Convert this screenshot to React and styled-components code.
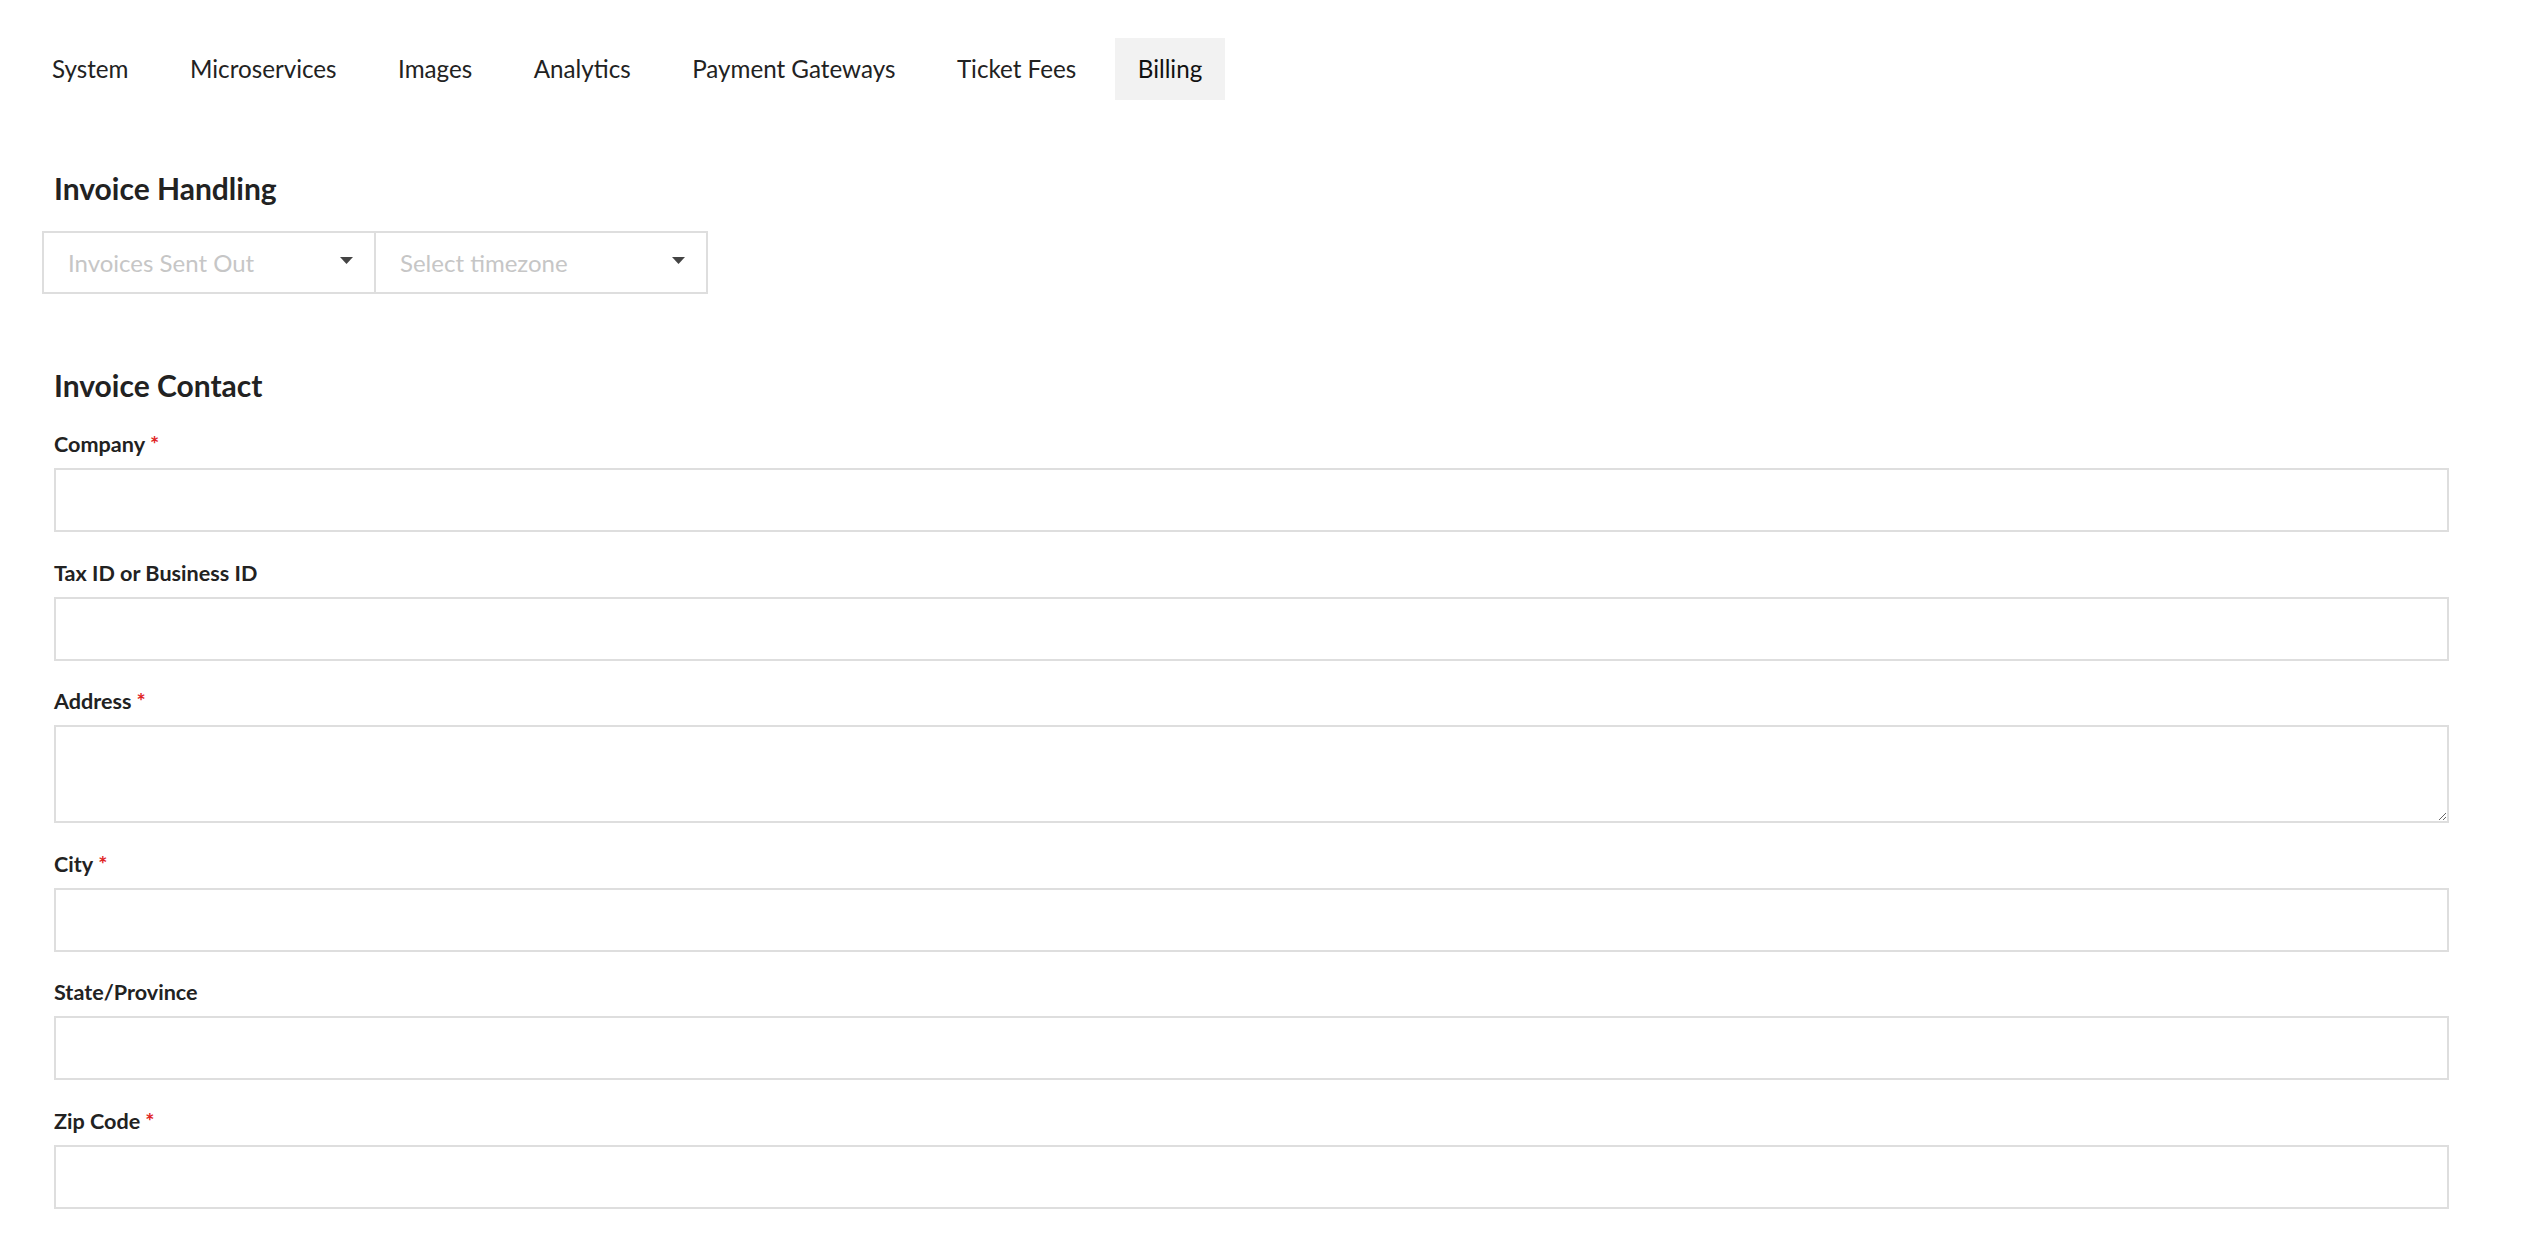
import React from 'react';
import styled, { createGlobalStyle } from 'styled-components';

const GlobalStyle = createGlobalStyle`
  body {
    margin: 0;
    background: #fff;
    color: #222;
    font-family: Lato, "Open Sans", "Liberation Sans", sans-serif;
  }
  * { box-sizing: border-box; }
`;

const Page = styled.div`
  padding: 38px 77px 40px 54px;
`;

const Tabs = styled.nav`
  display: flex;
  gap: 15.5px;
  margin-left: -25px;
`;

const Tab = styled.div`
  height: 62px;
  padding: 0 23px 2px;
  display: flex;
  align-items: center;
  font-size: 24.2px;
  color: ${p => (p.active ? '#111' : '#222')};
  background: ${p => (p.active ? '#f2f2f2' : 'transparent')};
  cursor: pointer;
`;

const SectionTitle = styled.h2`
  margin: ${p => p.top}px 0 ${p => p.bottom}px;
  font-size: 30px;
  line-height: 38px;
  font-weight: 700;
  color: #222;
`;

const SelectRow = styled.div`
  display: flex;
  margin-left: -12px;
`;

const Select = styled.div`
  width: 334px;
  height: 63px;
  border: 2px solid #dedede;
  padding: 0 21px 0 24px;
  display: flex;
  align-items: center;
  justify-content: space-between;
  font-size: 24px;
  color: #c6c6c6;
  background: #fff;

  & + & {
    margin-left: -2px;
  }

  svg {
    margin-top: -4px;
  }
`;

const Field = styled.div`
  display: flex;
  flex-direction: column;
  margin-bottom: 27.5px;
`;

const Label = styled.label`
  font-size: 21.6px;
  line-height: 26px;
  font-weight: 700;
  color: #222;
  margin-bottom: 11px;
`;

const Required = styled.span`
  color: #e02424;
  margin-left: 5px;
`;

const Input = styled.input`
  width: 100%;
  height: 64px;
  border: 2px solid #dedede;
  border-radius: 0;
  padding: 0 16px;
  font: inherit;
  font-size: 22px;
  outline: none;
`;

const TextArea = styled.textarea`
  display: block;
  width: 100%;
  height: 98px;
  border: 2px solid #dedede;
  border-radius: 0;
  padding: 12px 16px;
  font: inherit;
  font-size: 22px;
  resize: vertical;
  outline: none;
`;

const Caret = () => (
  <svg width="13" height="7" viewBox="0 0 13 7">
    <path d="M0 0h13L6.5 7z" fill="#444" />
  </svg>
);

const tabs = ['System', 'Microservices', 'Images', 'Analytics', 'Payment Gateways', 'Ticket Fees', 'Billing'];

const fields = [
  { label: 'Company', required: true },
  { label: 'Tax ID or Business ID' },
  { label: 'Address', required: true, multiline: true },
  { label: 'City', required: true },
  { label: 'State/Province' },
  { label: 'Zip Code', required: true },
];

const App = () => {
  return (
    <>
      <GlobalStyle />
      <Page>
        <Tabs>
          {tabs.map(t => (
            <Tab key={t} active={t === 'Billing'}>{t}</Tab>
          ))}
        </Tabs>

        <SectionTitle top={69} bottom={24}>Invoice Handling</SectionTitle>
        <SelectRow>
          <Select>
            <span>Invoices Sent Out</span>
            <Caret />
          </Select>
          <Select>
            <span>Select timezone</span>
            <Caret />
          </Select>
        </SelectRow>

        <SectionTitle top={72} bottom={27}>Invoice Contact</SectionTitle>
        {fields.map(f => (
          <Field key={f.label}>
            <Label>
              {f.label}
              {f.required && <Required>*</Required>}
            </Label>
            {f.multiline ? <TextArea /> : <Input type="text" />}
          </Field>
        ))}
      </Page>
    </>
  );
};

export default App;
